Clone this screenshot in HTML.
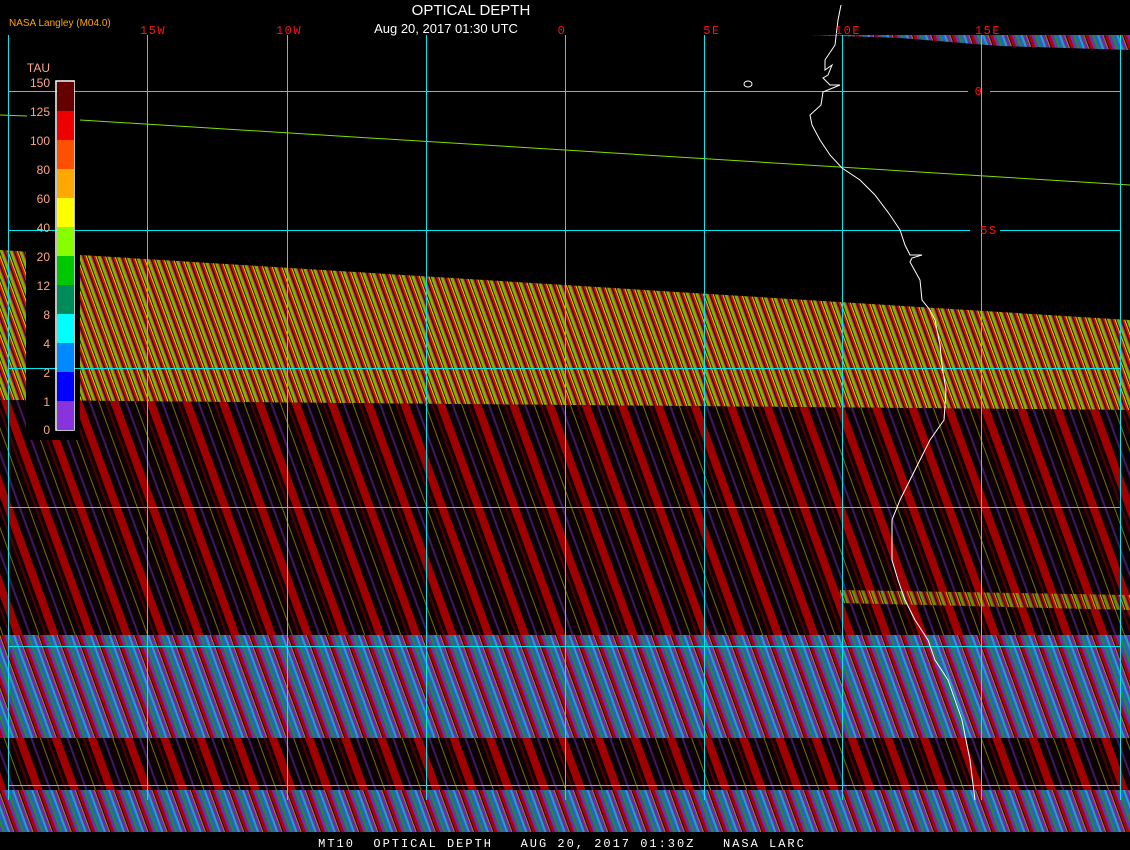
<!DOCTYPE html>
<html><head><style>
html,body{margin:0;padding:0;background:#000;width:1130px;height:850px;overflow:hidden}
svg{position:absolute;left:0;top:0}
.t{font-family:"Liberation Sans",sans-serif}
</style></head><body>
<svg width="1130" height="850" xmlns="http://www.w3.org/2000/svg">
<defs>
<pattern id="pTop" width="9" height="9" patternUnits="userSpaceOnUse" patternTransform="rotate(-20)">
<rect width="9" height="9" fill="#201000"/>
<rect x="0" width="2" height="9" fill="#d01000"/>
<rect x="2" width="1" height="9" fill="#e0d000"/>
<rect x="4" width="2" height="9" fill="#70c000"/>
<rect x="6" width="1" height="9" fill="#e07000"/>
<rect x="7" width="1" height="9" fill="#802080"/>
</pattern>
<pattern id="pDark" width="34" height="34" patternUnits="userSpaceOnUse" patternTransform="rotate(-20)">
<rect width="34" height="34" fill="#0c0004"/>
<rect x="0" width="8" height="34" fill="#a00000"/>
<rect x="14" width="2" height="34" fill="#3a1a60"/>
<rect x="23" width="1" height="34" fill="#707000"/>
<rect x="29" width="2" height="34" fill="#500000"/>
</pattern>
<pattern id="pBot" width="18" height="18" patternUnits="userSpaceOnUse" patternTransform="rotate(-20)">
<rect width="18" height="18" fill="#180620"/>
<rect x="0" width="3" height="18" fill="#b00010"/>
<rect x="3" width="3" height="18" fill="#6038b0"/>
<rect x="6" width="2" height="18" fill="#209020"/>
<rect x="8" width="3" height="18" fill="#2a60c8"/>
<rect x="11" width="2" height="18" fill="#20a8a8"/>
<rect x="13" width="3" height="18" fill="#7028b0"/>
<rect x="16" width="1" height="18" fill="#909000"/>
</pattern>
</defs>
<polygon points="0,250 1130,320 1130,410 0,400" fill="url(#pTop)"/>
<polygon points="0,400 1130,410 1130,600 0,590" fill="url(#pDark)"/>
<rect x="0" y="590" width="1130" height="45" fill="url(#pDark)"/>
<polygon points="840,590 1130,595 1130,610 840,603" fill="url(#pTop)" opacity="0.8"/>
<rect x="0" y="635" width="1130" height="103" fill="url(#pBot)"/>
<rect x="0" y="738" width="1130" height="52" fill="url(#pDark)"/>
<rect x="0" y="790" width="1130" height="42" fill="url(#pBot)"/>
<polygon points="810,35 1130,35 1130,50 1000,46 900,38" fill="url(#pBot)"/>
<rect x="26" y="60" width="54" height="380" fill="#000"/>
<line x1="0" y1="115" x2="27" y2="116" stroke="#80e000" stroke-width="1"/>
<line x1="80" y1="120" x2="1130" y2="185" stroke="#80e000" stroke-width="1"/>
<g stroke="#00e8f0" stroke-width="1">
<line x1="8.5" y1="35" x2="8.5" y2="800"/><line x1="147.5" y1="35" x2="147.5" y2="800"/>
<line x1="287.5" y1="35" x2="287.5" y2="800"/><line x1="426.5" y1="35" x2="426.5" y2="800"/>
<line x1="565.5" y1="35" x2="565.5" y2="800"/><line x1="704.5" y1="35" x2="704.5" y2="800"/>
<line x1="842.5" y1="35" x2="842.5" y2="800"/><line x1="981.5" y1="35" x2="981.5" y2="800"/>
<line x1="1120.5" y1="35" x2="1120.5" y2="800"/>
<line x1="8" y1="91.5" x2="968" y2="91.5"/><line x1="990" y1="91.5" x2="1120" y2="91.5"/>
<line x1="8" y1="230.5" x2="970" y2="230.5"/><line x1="1000" y1="230.5" x2="1120" y2="230.5"/>
<line x1="8" y1="368.5" x2="1120" y2="368.5"/><line x1="8" y1="507.5" x2="1120" y2="507.5"/>
<line x1="8" y1="646.5" x2="1120" y2="646.5"/><line x1="8" y1="785.5" x2="1120" y2="785.5"/>
</g>
<polyline fill="none" stroke="#fff" stroke-width="1" points="841,5 838,20 835,45 825,60 825,70 832,65 828,75 823,78 830,85 840,85 823,92 821,105 810,115 812,125 820,140 830,155 842,168 860,180 875,195 890,215 900,230 905,245 910,255 922,255 912,258 910,262 920,280 922,300 930,310 935,320 940,345 942,365 946,390 944,420 930,440 920,460 910,480 900,500 892,520 892,560 898,580 905,600 915,620 928,640 935,660 948,680 955,700 962,720 966,740 970,760 975,800"/>
<ellipse cx="748" cy="84" rx="4" ry="3" fill="none" stroke="#fff"/>
<g>
<rect x="56" y="81" width="18" height="349" fill="none" stroke="#fff" stroke-width="1.5"/>
<rect x="57" y="82" width="17" height="29" fill="#660000"/>
<rect x="57" y="111" width="17" height="29" fill="#ee0000"/>
<rect x="57" y="140" width="17" height="29" fill="#ff5000"/>
<rect x="57" y="169" width="17" height="29" fill="#ffa800"/>
<rect x="57" y="198" width="17" height="29" fill="#ffff00"/>
<rect x="57" y="227" width="17" height="29" fill="#88ff00"/>
<rect x="57" y="256" width="17" height="29" fill="#00c800"/>
<rect x="57" y="285" width="17" height="29" fill="#008c5a"/>
<rect x="57" y="314" width="17" height="29" fill="#00ffff"/>
<rect x="57" y="343" width="17" height="29" fill="#0088ff"/>
<rect x="57" y="372" width="17" height="29" fill="#0000ff"/>
<rect x="57" y="401" width="17" height="29" fill="#8833dd"/>
</g>
<g class="t" fill="#ffa880" font-size="12" text-anchor="end">
<text x="50" y="72">TAU</text>
<text x="50" y="87">150</text><text x="50" y="116">125</text><text x="50" y="145">100</text>
<text x="50" y="174">80</text><text x="50" y="203">60</text><text x="50" y="232">40</text>
<text x="50" y="261">20</text><text x="50" y="290">12</text><text x="50" y="319">8</text>
<text x="50" y="348">4</text><text x="50" y="377">2</text><text x="50" y="406">1</text>
<text x="50" y="434">0</text>
</g>
<text class="t" x="9" y="26" fill="#ffa800" font-size="10">NASA Langley (M04.0)</text>
<text class="t" x="471" y="15" fill="#fff" font-size="15" text-anchor="middle">OPTICAL DEPTH</text>
<text class="t" x="446" y="33" fill="#fff" font-size="13" text-anchor="middle">Aug 20, 2017 01:30 UTC</text>
<g font-family="Liberation Mono,monospace" fill="#ff1010" font-size="12" letter-spacing="1.5" text-anchor="middle">
<text x="153" y="34">15W</text><text x="289" y="34">10W</text><text x="562" y="34">0</text>
<text x="712" y="34">5E</text><text x="848" y="34">10E</text><text x="988" y="34">15E</text>
<text x="979" y="95">0</text><text x="989" y="234">5S</text>
</g>
<text x="562" y="847" fill="#fff" font-family="Liberation Mono,monospace" font-size="12" letter-spacing="2" text-anchor="middle" xml:space="preserve">MT10  OPTICAL DEPTH   AUG 20, 2017 01:30Z   NASA LARC</text>
</svg>
</body></html>
